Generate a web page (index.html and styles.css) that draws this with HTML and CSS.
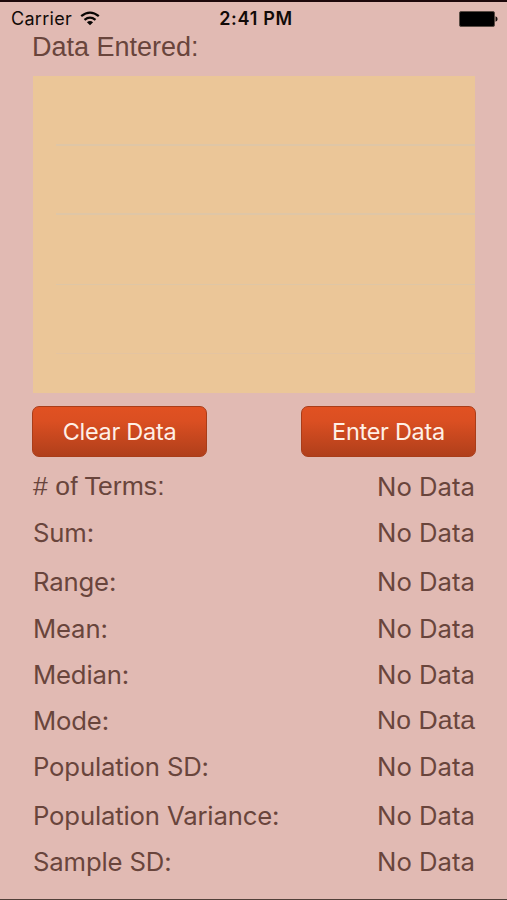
FILE: index.html
```
<!DOCTYPE html>
<html lang="en">
<head>
<meta charset="utf-8">
<title>Data Statistics</title>
<link rel="stylesheet" href="styles.css">
</head>
<body>
<main class="screen">
  <header class="status">
    <div class="carrier"><span>Carrier</span>
      <svg class="wifi" viewBox="0 0 20 15" width="20" height="15" fill="none" stroke="#080504" stroke-width="2.3">
        <path d="M1.2 5.2Q10 -2 18.8 5.2"/>
        <path d="M4.5 8.8Q10 4.4 15.5 8.8"/>
        <path d="M6.9 11.3Q10 8.8 13.1 11.3L10 14.3Z" fill="#080504" stroke="none"/>
      </svg>
    </div>
    <time class="clock">2:41 PM</time>
    <svg class="battery" viewBox="0 0 39 16" width="39" height="16">
      <rect x=".5" y=".5" width="35" height="15" rx="1.5" fill="#000" stroke="#594b43"/>
      <path d="M36.5 5.3Q38.6 6 38.6 8T36.5 10.7Z" fill="#17100e"/>
    </svg>
  </header>
  <h1 class="title">Data Entered:</h1>
  <section class="entries">
    <div class="entry"></div><div class="entry"></div><div class="entry faint"></div><div class="entry faint"></div>
  </section>
  <div class="actions">
    <button class="button">Clear Data</button>
    <button class="button">Enter Data</button>
  </div>
  <dl class="stats">
    <div class="stat"><dt class="terms">&#35; of Terms:</dt><dd>No Data</dd></div>
    <div class="stat"><dt>Sum:</dt><dd>No Data</dd></div>
    <div class="stat"><dt>Range:</dt><dd>No Data</dd></div>
    <div class="stat"><dt>Mean:</dt><dd>No Data</dd></div>
    <div class="stat"><dt>Median:</dt><dd>No Data</dd></div>
    <div class="stat"><dt>Mode:</dt><dd class="mode">No Data</dd></div>
    <div class="stat"><dt>Population SD:</dt><dd>No Data</dd></div>
    <div class="stat"><dt>Population Variance:</dt><dd>No Data</dd></div>
    <div class="stat"><dt>Sample SD:</dt><dd>No Data</dd></div>
  </dl>
</main>
</body>
</html>
```
FILE: styles.css
```
* { box-sizing: border-box; margin: 0; padding: 0; }
body { background: #e1bab3; }
.screen {
  width: 507px;
  height: 900px;
  overflow: hidden;
  border-top: 2px solid #1d080b;
  border-bottom: 1px solid #514039;
  background: #e1bab3;
  color: #69453c;
  font-family: Inter, "Liberation Sans", sans-serif;
}
.status {
  display: grid;
  grid-template-columns: 1fr auto 1fr;
  align-items: center;
  height: 31px;
  padding: 0 9px 0 10px;
  color: #110a08;
  font-size: 18px;
  line-height: 32px;
}
.carrier { display: flex; align-items: center; gap: 8px; padding: 1px 0 0 1px; letter-spacing: .3px; }
.wifi { margin-top: -2px; }
.clock { margin-left: 4px; padding-top: 1px; font-weight: 600; letter-spacing: .7px; }
.battery { justify-self: end; }
.title {
  height: 43px;
  padding-left: 32px;
  font: 400 27px/28px "Liberation Sans", sans-serif;
}
.entries {
  height: 317px;
  margin: 0 32px 0 33px;
  background: #ebc698;
}
.entry { height: 69.5px; margin-left: 23px; border-bottom: 2px solid #dfc6a6; }
.entry.faint { border-bottom: 1px solid #dfc6a5; }
.entry:last-child { border-color: #e4c4a1; }
.actions {
  display: flex;
  justify-content: space-between;
  margin: 13px 31px 0 32px;
}
.button {
  width: 175px;
  height: 51px;
  border: 1px solid #a93d19;
  border-radius: 7px;
  background: linear-gradient(#e15122, #db4f22 28%, #b03f1b);
  color: #fff0e6;
  font: 400 23.5px/49px Inter, sans-serif;
  letter-spacing: -.3px;
}
.stats {
  display: grid;
  grid-template-rows: 46px 49px 47px 46px 46px 46px 49px 46px 30px;
  margin: 15px 32px 0 33px;
  font-size: 25.7px;
  line-height: 30px;
}
.stat { display: flex; justify-content: space-between; height: 30px; }
dt { letter-spacing: -.16px; }
.terms, .mode { font-family: "Liberation Sans", sans-serif; font-size: 26.5px; line-height: 28px; }
.terms { letter-spacing: .1px; }
.mode { letter-spacing: .1px; }
```
